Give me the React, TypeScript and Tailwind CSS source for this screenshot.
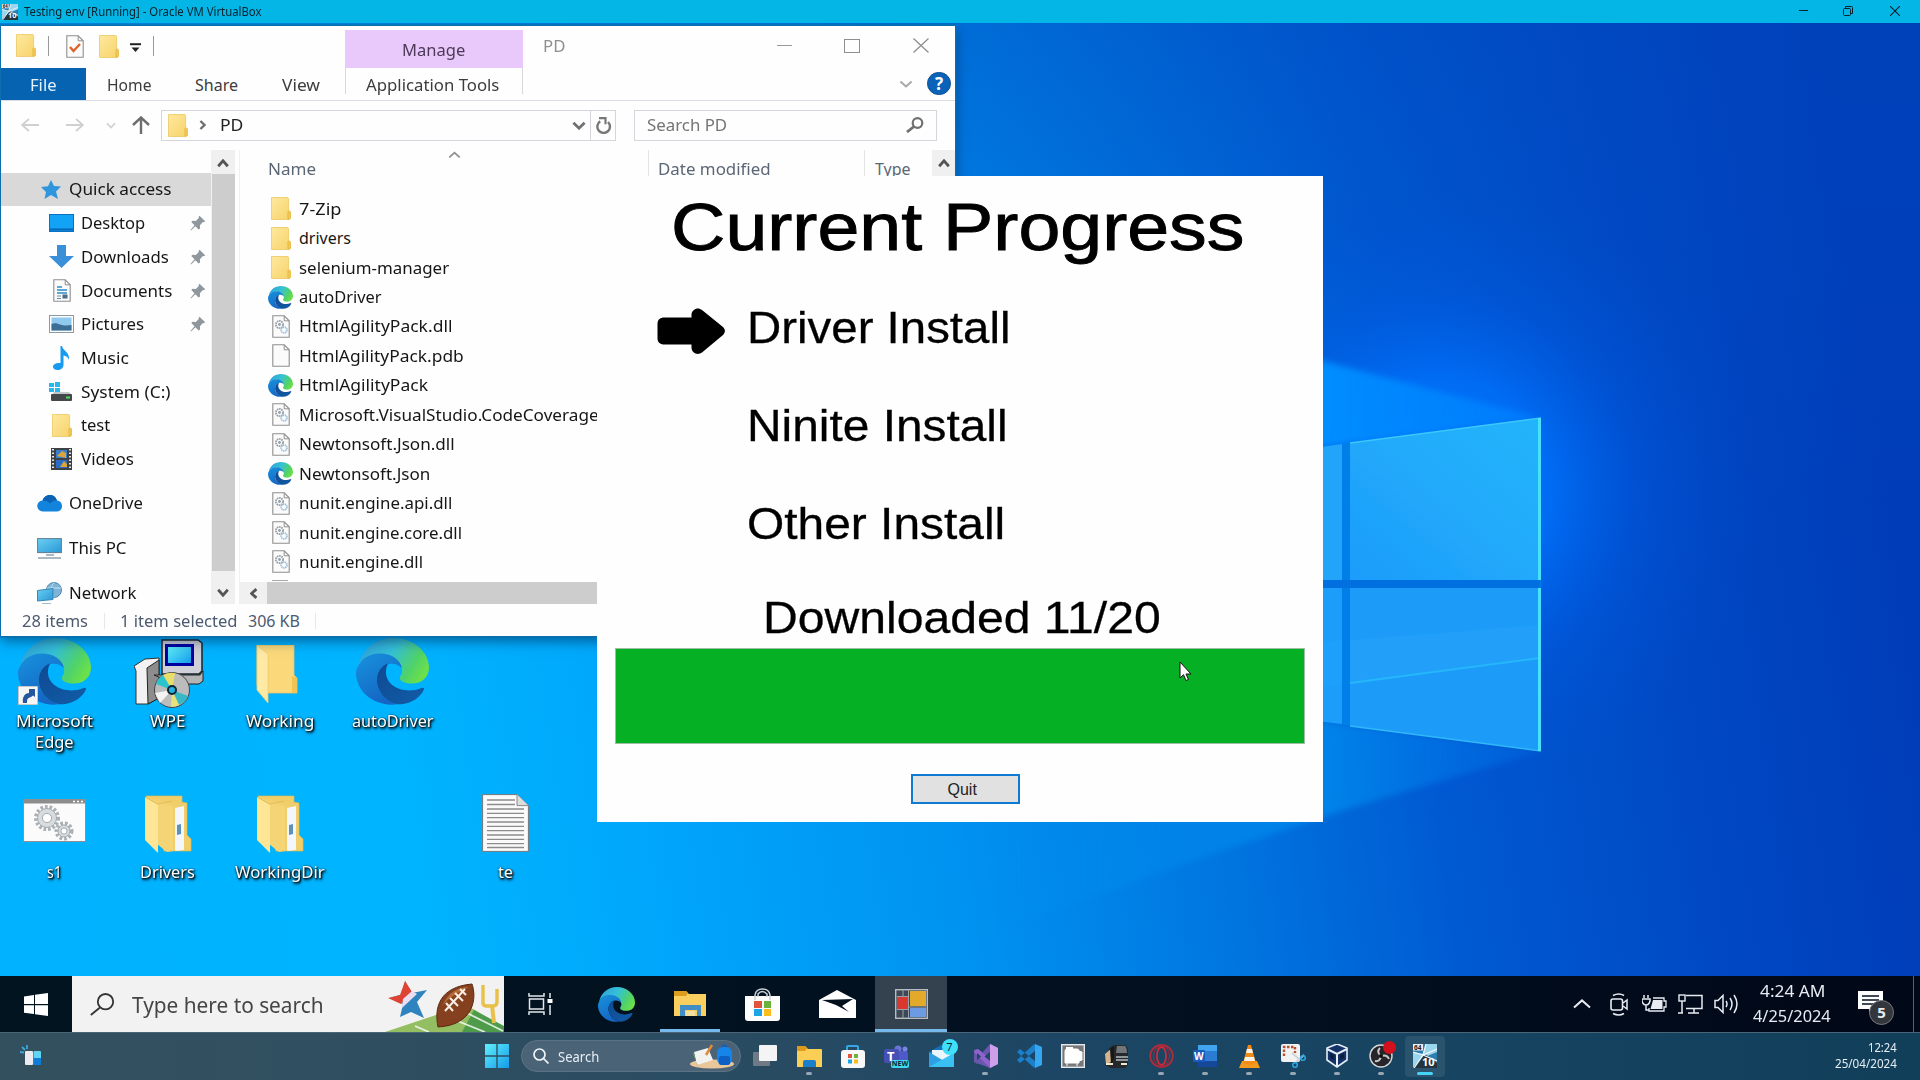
import React, { useLayoutEffect, useRef, useState } from "react";

/* Single line of text stretched horizontally to a given width. */
function T({ w, children, className = "" }: { w: number; children: string; className?: string }) {
  const ref = useRef<HTMLSpanElement>(null);
  const [k, setK] = useState(1);
  useLayoutEffect(() => {
    if (ref.current && ref.current.offsetWidth) setK(w / ref.current.offsetWidth);
  }, [w, children]);
  return (
    <span className={"flex shrink-0 whitespace-nowrap " + className} style={{ width: w }}>
      <span ref={ref} className="block shrink-0 origin-left" style={{ transform: `scaleX(${k})` }}>
        {children}
      </span>
    </span>
  );
}

function Svg({ w, h, vb, children, className = "" }: { w: number; h: number; vb?: string; children: React.ReactNode; className?: string }) {
  return (
    <svg width={w} height={h} viewBox={vb ?? `0 0 ${w} ${h}`} preserveAspectRatio="none" fill="none" className={"shrink-0 " + className}>
      {children}
    </svg>
  );
}

/* ---------- shared icons ---------- */

const Defs = () => (
  <svg width="0" height="0" className="absolute">
    <defs>
      <linearGradient id="eTop" x1="0" y1="0.2" x2="1" y2="0.6">
        <stop offset="0" stopColor="#2f9fd8" />
        <stop offset="0.45" stopColor="#35c1d8" />
        <stop offset="0.8" stopColor="#4fd26a" />
        <stop offset="1" stopColor="#6be04a" />
      </linearGradient>
      <linearGradient id="eMid" x1="0" y1="0" x2="0.5" y2="1">
        <stop offset="0" stopColor="#1793dd" />
        <stop offset="1" stopColor="#1565c4" />
      </linearGradient>
      <linearGradient id="eLow" x1="0" y1="0" x2="1" y2="1">
        <stop offset="0" stopColor="#0f4a92" />
        <stop offset="1" stopColor="#125ca8" />
      </linearGradient>
      <linearGradient id="fold" x1="0" y1="0" x2="1" y2="1">
        <stop offset="0" stopColor="#ffe9a0" />
        <stop offset="1" stopColor="#f6d268" />
      </linearGradient>
      <linearGradient id="w11" x1="0" y1="0" x2="1" y2="1">
        <stop offset="0" stopColor="#5ff0fb" />
        <stop offset="1" stopColor="#159bea" />
      </linearGradient>
      <linearGradient id="scr" x1="0" y1="0" x2="1" y2="1">
        <stop offset="0" stopColor="#6bd0f4" />
        <stop offset="1" stopColor="#2a97d6" />
      </linearGradient>
    </defs>
  </svg>
);

const Edge = ({ w, h }: { w: number; h: number }) => (
  <Svg w={w} h={h} vb="0 0 100 100">
    <path d="M3 42C8 16 28 0 51 0c28 0 49 21 49 44 0 15-10 24-24 24-10 0-17-4-16-9 1-4 4-5 3-12C61 34 48 24 32 24 18 24 8 32 3 42z" fill="url(#eTop)" />
    <path d="M2 44C7 31 18 23 33 23c15 0 28 9 30 22-4-5-11-8-19-6C30 43 25 60 31 76c4 11 14 20 25 23C25 103 0 80 0 52c0-3 1-6 2-8z" fill="url(#eMid)" />
    <path d="M44 38c-14 5-19 22-13 38 5 13 17 24 32 23 14-2 25-10 30-22 1-2-1-4-4-2-21 9-47-1-48-23 0-6 1-10 3-14z" fill="url(#eLow)" />
  </Svg>
);

const Folder = ({ w = 20, h = 23 }: { w?: number; h?: number }) => (
  <Svg w={w} h={h} vb="0 0 20 23">
    <path d="M.5.5H17l.6 1v12l1.9 1V21l-1.2 1.5H.5z" fill="url(#fold)" stroke="#ecc860" strokeWidth=".8" />
    <path d="M17 14.5v7.5M17 14l2.5 1.5v6L17 22.5z" stroke="#e8bd4b" fill="#f1c757" strokeWidth=".7" />
  </Svg>
);

const Page = ({ children }: { children?: React.ReactNode }) => (
  <Svg w={18} h={23}>
    <path d="M.8.8h11.4l5 5v16.4H.8z" fill="#fbfbfb" stroke="#8f8f8f" strokeWidth="1.1" />
    <path d="M12.2.8v5h5" stroke="#8f8f8f" />
    {children}
  </Svg>
);

const Dll = () => (
  <Page>
    <circle cx="7.5" cy="9.5" r="3.6" stroke="#959fa8" strokeWidth="1.8" strokeDasharray="1.6 .7" />
    <circle cx="7.5" cy="9.5" r="1.4" fill="#959fa8" />
    <circle cx="12" cy="15" r="2.9" stroke="#9fc0d8" strokeWidth="1.8" strokeDasharray="1.4 .6" />
  </Page>
);

const Pin = () => (
  <Svg w={16} h={16}>
    <path d="M9.5.8l5.7 5.4-1.3 1.1-1-.3-3 3.2.2 3.2-1.5 1.2-3.2-3.3L1 15.6.5 15l4-4.7L1.3 7l1.3-1.2 3.2.2 3-3-.2-1.1z" fill="#8f979e" />
  </Svg>
);

const Chev = ({ d, w = 14, h = 10, c = "#606060", s = 2 }: { d: "up" | "down" | "left" | "right"; w?: number; h?: number; c?: string; s?: number }) => {
  const p = { up: "M10 80L50 20L90 80", down: "M10 20L50 80L90 20", left: "M80 10L20 50L80 90", right: "M20 10L80 50L20 90" }[d];
  return (
    <Svg w={w} h={h} vb="0 0 100 100">
      <path d={p} stroke={c} strokeWidth={s} vectorEffect="non-scaling-stroke" />
    </Svg>
  );
};

/* ---------- wallpaper ---------- */

const Wallpaper = () => (
  <svg className="absolute inset-0" width="1920" height="953" viewBox="0 23 1920 953">
    <defs>
      <linearGradient id="bg" gradientUnits="userSpaceOnUse" x1="0" y1="976" x2="1920" y2="700">
        <stop offset="0" stopColor="#00b2ff" />
        <stop offset=".22" stopColor="#00b4ff" />
        <stop offset=".36" stopColor="#00a4fa" />
        <stop offset=".5" stopColor="#0092f0" />
        <stop offset=".63" stopColor="#0076e0" />
        <stop offset=".75" stopColor="#005ad2" />
        <stop offset=".88" stopColor="#0048c4" />
        <stop offset="1" stopColor="#003cb8" />
      </linearGradient>
      <radialGradient id="glow" gradientUnits="userSpaceOnUse" cx="1440" cy="490" r="320">
        <stop offset="0" stopColor="#007cff" />
        <stop offset=".35" stopColor="#0070fa" stopOpacity=".85" />
        <stop offset=".6" stopColor="#005ee8" stopOpacity=".4" />
        <stop offset="1" stopColor="#004ccc" stopOpacity="0" />
      </radialGradient>
      <linearGradient id="dark" x1="0" y1="0" x2="0" y2="1">
        <stop offset="0" stopColor="#0048bc" stopOpacity=".4" />
        <stop offset="1" stopColor="#0050c8" stopOpacity="0" />
      </linearGradient>
      <linearGradient id="beamA" x1="0" y1="0" x2="1" y2="0">
        <stop offset="0" stopColor="#0090ff" />
        <stop offset="1" stopColor="#0080ff" stopOpacity=".7" />
      </linearGradient>
      <linearGradient id="beamB" gradientUnits="userSpaceOnUse" x1="1000" y1="0" x2="1541" y2="0">
        <stop offset="0" stopColor="#0094f2" stopOpacity="0" />
        <stop offset=".6" stopColor="#0088ec" stopOpacity=".85" />
        <stop offset="1" stopColor="#006ce4" stopOpacity=".4" />
      </linearGradient>
      <linearGradient id="pane" x1="0" y1="1" x2="1" y2="0">
        <stop offset="0" stopColor="#1c9cfb" />
        <stop offset=".6" stopColor="#22acfb" />
        <stop offset="1" stopColor="#24b4fa" />
      </linearGradient>
      <filter id="soft" x="-10%" y="-10%" width="120%" height="120%"><feGaussianBlur stdDeviation="3" /></filter>
      <filter id="line" x="-10%" y="-10%" width="120%" height="120%"><feGaussianBlur stdDeviation=".6" /></filter>
    </defs>
    <rect y="23" width="1920" height="953" fill="url(#bg)" />
    <rect y="23" width="1920" height="480" fill="url(#dark)" />
    <rect y="23" width="1920" height="953" fill="url(#glow)" />
    <path d="M1300 355L1541 418L1350 443L1300 450z" fill="url(#beamA)" filter="url(#soft)" />
    <path d="M1300 718L1541 751L1350 808L1180 865L1000 930V700z" fill="url(#beamB)" filter="url(#soft)" />
    <path d="M1300 449L1541 418V751L1300 719z" fill="#007fe8" />
    <rect x="1300" y="580" width="240" height="8" fill="#006fe0" />
    <g filter="url(#line)">
      <path d="M1300 450L1342 444V580H1300z" fill="#22a4fb" />
      <path d="M1350 443L1541 418V580H1350z" fill="url(#pane)" />
      <path d="M1300 588H1342V724L1300 719z" fill="#1c9dfa" />
      <path d="M1350 588H1541V751L1350 726z" fill="#1f9cf8" />
      <path d="M1300 645V690L1342 684V640zM1350 683L1540 658V625L1350 640z" fill="#22a6fb" opacity=".35" />
      <path d="M1350 683L1540 658" stroke="#26b6fb" strokeWidth="2" />
      <path d="M1350 443L1541 418" stroke="#3cc8fb" strokeWidth="1.5" />
      <path d="M1350 726L1541 751" stroke="#30b8f8" strokeWidth="1.5" />
      <path d="M1539.500 418V580M1539.500 588V751" stroke="#46e2f8" strokeWidth="3" />
    </g>
  </svg>
);

/* ---------- explorer window ---------- */

const side: { n: string; w: number; icon: React.ReactNode; pin?: boolean }[] = [
  { n: "Desktop", w: 64, pin: true, icon: <Svg w={25} h={18}><rect x=".5" y=".5" width="24" height="17" fill="#12a2f6" stroke="#0a72c2" /><path d="M1 15.500h23" stroke="#0865b4" strokeWidth="2" /></Svg> },
  { n: "Downloads", w: 88, pin: true, icon: <Svg w={25} h={23}><path d="M8 0h9v11h8L12.500 23 0 11h8z" fill="#3990d8" /></Svg> },
  { n: "Documents", w: 91, pin: true, icon: <Page><path d="M4 8h5M4 11h10M4 14h10" stroke="#2b8ac6" strokeWidth="1.400" /><path d="M4 17h4M4 19.500h4" stroke="#6a8ca4" /><rect x="9.500" y="15.500" width="5" height="4" fill="#4b6d86" /></Page> },
  { n: "Pictures", w: 63, pin: true, icon: <Svg w={25} h={18}><rect x=".5" y=".5" width="24" height="17" fill="#fff" stroke="#8d99a3" /><rect x="2.500" y="2.500" width="20" height="13" fill="#8fc9ee" /><path d="M2.500 9c6-3 8 3 20 1v5.500h-20z" fill="#3b6e92" /></Svg> },
  { n: "Music", w: 48, icon: <Svg w={18} h={24}><path d="M9 0c1 5 8 6 7 14-1-3-3-4-5.500-4.500V19c0 3-3 5-6 5S0 22.500 0 20.500 3 16.500 7.500 17V0z" fill="#189af0" /></Svg> },
  { n: "System (C:)", w: 90, icon: <Svg w={25} h={19}><path d="M0 1h5v4H0zM6 0h5v5H6zM0 6h5v4H0zM6 6h5v4H6z" fill="#28b8ee" /><path d="M5 10h15l3 3H3z" fill="#c4c7c9" /><rect x="2" y="12" width="21" height="7" rx="1" fill="#45484a" /><path d="M17 15.500h4" stroke="#4be05a" strokeWidth="2" /></Svg> },
  { n: "test", w: 29, icon: <Folder /> },
  { n: "Videos", w: 53, icon: <Svg w={21} h={22}><rect width="21" height="22" fill="#3d4044" /><path d="M2 1v20M19 1v20" stroke="#e8e8e8" strokeWidth="2" strokeDasharray="1.500 2" /><rect x="5" y="2" width="11" height="8" fill="#3a7fc8" /><rect x="5" y="12" width="11" height="8" fill="#2a6cc4" /><path d="M6 8l5-5 4 2v5zM9 19l4-6 3 3v3z" fill="#d9a53a" /></Svg> },
];

const files: [string, number, string][] = [
  ["7-Zip", 42, "f"], ["drivers", 52, "f"], ["selenium-manager", 150, "f"], ["autoDriver", 83, "e"],
  ["HtmlAgilityPack.dll", 153, "d"], ["HtmlAgilityPack.pdb", 165, "p"], ["HtmlAgilityPack", 129, "e"],
  ["Microsoft.VisualStudio.CodeCoverage", 300, "d"], ["Newtonsoft.Json.dll", 156, "d"], ["Newtonsoft.Json", 131, "e"],
  ["nunit.engine.api.dll", 153, "d"], ["nunit.engine.core.dll", 163, "d"], ["nunit.engine.dll", 124, "d"],
];

const Explorer = () => (
  <div className="absolute left-[1px] top-[3px] flex h-[610px] w-[954px] flex-col overflow-hidden bg-[#fefefe] text-[16px] leading-[20px] text-[#161616] shadow-[0_0_0_1.5px_#0b6fae,0_5px_12px_rgba(0,30,70,0.55)]">
    {/* title row */}
    <div className="flex h-[42px] shrink-0">
      <div className="flex w-[344px] items-center pb-[3px] pl-[15px]">
        <Folder />
        <div className="ml-[12px] h-[20px] w-px bg-[#9a9a9a]" />
        <div className="ml-[17px] mt-[2px]"><Page><path d="M4 12l3.500 4L14 9" stroke="#e0622c" strokeWidth="2.400" /></Page></div>
        <div className="ml-[15px] mt-[2px]"><Folder /></div>
        <div className="ml-[11px] mt-[4px]"><Svg w={11} h={10}><path d="M0 1.200h11" stroke="#222" strokeWidth="2" /><path d="M1.500 4.500h8L5.500 9z" fill="#222" /></Svg></div>
        <div className="ml-[12px] h-[20px] w-px bg-[#9a9a9a]" />
      </div>
      <div className="mt-[4px] flex h-[38px] w-[178px] items-center bg-[#e9c9fb] pl-[57px] pt-px text-[#4c3a58]"><T w={63}>Manage</T></div>
      <div className="flex flex-1 items-center pb-[3px] text-[#8f8f8f]">
        <div className="pl-[20px]"><T w={22}>PD</T></div>
        <div className="ml-[212px] h-[1.5px] w-[15px] bg-[#9a9a9a]" />
        <div className="ml-[52px] h-[14px] w-[16px] border-[1.5px] border-[#8f8f8f]" />
        <Svg w={16} h={15} className="ml-[53px]"><path d="M.5.5l15 14M15.500.5l-15 14" stroke="#8f8f8f" strokeWidth="1.300" /></Svg>
      </div>
    </div>
    {/* ribbon tabs */}
    <div className="flex h-[33px] shrink-0 items-center border-b border-[#dcdce4] text-[#3c3c3c]">
      <div className="flex h-[32px] w-[85px] items-center bg-[#0563b1] pl-[29px] pt-px text-[#e6f2fc]"><T w={27}>File</T></div>
      <div className="flex w-[259px] items-center pl-[21px] pt-px">
        <T w={45}>Home</T>
        <T w={43} className="ml-[43px]">Share</T>
        <T w={38} className="ml-[44px]">View</T>
      </div>
      <div className="flex h-[26px] w-[178px] items-center self-start border-x border-[#d8d8d8] pl-[20px] pt-[7px]"><T w={133}>Application Tools</T></div>
      <div className="flex flex-1 items-center justify-end pb-px pr-[4px]">
        <Chev d="down" w={14} h={8} c="#a8a8a8" />
        <div className="ml-[14px] flex h-[23px] w-[24px] items-center justify-center rounded-full border border-[#0a4f94] bg-[#0a63b8] text-[17px] font-bold text-white">?</div>
      </div>
    </div>
    {/* navigation */}
    <div className="flex h-[49px] shrink-0 items-center pb-px">
      <Svg w={18} h={14} className="ml-[20px]"><path d="M8 1L1 7l7 6M1 7h17" stroke="#d0d0d0" strokeWidth="1.800" /></Svg>
      <Svg w={18} h={14} className="ml-[27px]"><path d="M10 1l7 6-7 6M17 7H0" stroke="#d0d0d0" strokeWidth="1.800" /></Svg>
      <div className="ml-[22px]"><Chev d="down" w={10} h={7} c="#d0d0d0" s={1.6} /></div>
      <Svg w={18} h={18} className="ml-[16px]"><path d="M1 9L9 1.500 17 9M9 2v16" stroke="#6d6d6d" strokeWidth="2.400" /></Svg>
      <div className="ml-[11px] flex h-[31px] w-[455px] items-center border border-[#d5d5dc] pl-[6px]">
        <Folder />
        <div className="ml-[11px]"><Chev d="right" w={7} h={10} c="#6d6d6d" s={2.4} /></div>
        <T w={23} className="ml-[14px] text-[#222]">PD</T>
        <div className="ml-[329px]"><Chev d="down" w={14} h={9} c="#707070" s={2.8} /></div>
        <div className="ml-[4px] h-full w-px bg-[#d5d5dc]" />
        <Svg w={16} h={17} className="ml-[5px]"><path d="M4.200 4.300A6.300 6.300 0 1 0 12 5" stroke="#777" strokeWidth="2.400" /><path d="M3 1.200h6.500v6" stroke="#777" strokeWidth="2.200" /></Svg>
      </div>
      <div className="ml-[18px] flex h-[31px] w-[303px] items-center justify-between border border-[#d5d5dc] pl-[12px] pr-[12px] text-[#757575]">
        <T w={80}>Search PD</T>
        <Svg w={18} h={16}><circle cx="11.500" cy="6" r="4.800" stroke="#707070" strokeWidth="2.200" /><path d="M8 9.500L1 15" stroke="#707070" strokeWidth="2.800" /></Svg>
      </div>
    </div>
    {/* body */}
    <div className="flex h-[454px] shrink-0">
      <div className="flex w-[210px] flex-col overflow-hidden pt-[23px]">
        <div className="mb-[0.5px] flex h-[33px] shrink-0 items-center bg-[#d9d9d9] pb-px pl-[40px]">
          <Svg w={20} h={19}><path d="M10 0l3 6 7 .5-5 5 2 7.500-7-4-6.500 4L5 12 0 7l7-.8z" fill="#2f95dc" /></Svg>
          <T w={103} className="ml-[8px]">Quick access</T>
        </div>
        {side.map((s) => (
          <div key={s.n} className="flex h-[33.65px] shrink-0 items-center">
            <div className="ml-[48px] flex w-[25px] justify-center">{s.icon}</div>
            <T w={s.w} className="ml-[7px]">{s.n}</T>
            {s.pin && <div className="ml-auto mr-[5px]"><Pin /></div>}
          </div>
        ))}
        <div className="mt-[11px] flex h-[33.6px] shrink-0 items-center pl-[36px]">
          <Svg w={25} h={17}><path d="M6 16.500a5.500 5.500 0 0 1-.500-11C7 1.500 10 0 13 0c4 0 6 2.500 7 5.500 3 .2 5 2.500 5 5.500s-2 5.500-5 5.500z" fill="#1384dc" /><path d="M5.500 5.500C7 1.500 10 0 13 0c4 0 6 2.500 7 5.500-3-.3-5 .5-7 3C10.500 6 8 5.300 5.500 5.500z" fill="#0b62b6" /></Svg>
          <T w={74} className="ml-[7px]">OneDrive</T>
        </div>
        <div className="mt-[11.3px] flex h-[33.6px] shrink-0 items-center pl-[36px]">
          <Svg w={25} h={21}><rect x=".6" y=".6" width="23.800" height="14" fill="url(#scr)" stroke="#5e7d92" /><path d="M9 17h8M1 20h23" stroke="#8fa3b0" strokeWidth="1.500" /></Svg>
          <T w={58} className="ml-[7px]">This PC</T>
        </div>
        <div className="mt-[11.3px] flex h-[33.6px] shrink-0 items-center pl-[36px]">
          <Svg w={25} h={23}><circle cx="17" cy="8" r="7.500" fill="#7eb4d6" stroke="#4c89b0" /><path d="M17 .5c-4 5-4 10 0 15M10 6h14" stroke="#c6e2f2" /><path d="M.5 8.500L16 6.500v11l-15.500 1.500z" fill="url(#scr)" stroke="#3a86b4" /><path d="M5 22h9" stroke="#8fa3b0" strokeWidth="1.500" /></Svg>
          <T w={67} className="ml-[7px]">Network</T>
        </div>
      </div>
      <div className="flex h-full w-[24px] flex-col items-center bg-[#f0f0f0]">
        <div className="flex h-[24px] items-center pt-[2px]"><Chev d="up" w={12} h={9} c="#555" s={2.8} /></div>
        <div className="h-[397px] w-[23px] bg-[#cdcdcd]" />
        <div className="flex flex-1 items-center pt-[10px]"><Chev d="down" w={12} h={9} c="#555" s={2.8} /></div>
      </div>
      <div className="ml-[4px] flex flex-1 flex-col overflow-hidden border-l border-[#f0f0f0]">
        <div className="flex h-[36px] shrink-0 text-[#5b6675]">
          <div className="flex w-[409px] items-center border-r border-[#e4e4e4] pl-[28px] pt-px">
            <T w={48}>Name</T>
            <div className="mb-[28px] ml-[132px]"><Chev d="up" w={13} h={8} c="#909090" s={1.8} /></div>
          </div>
          <div className="flex w-[216px] items-center border-r border-[#e4e4e4] pl-[9px] pt-px"><T w={113}>Date modified</T></div>
          <div className="flex w-[67px] items-center pl-[10px] pt-px"><T w={36}>Type</T></div>
          <div className="flex flex-1 items-start justify-center bg-[#f0f0f0] pt-[9px]"><Chev d="up" w={12} h={9} c="#555" s={2.8} /></div>
        </div>
        <div className="flex h-[396px] shrink-0 flex-col overflow-hidden pt-[8px]">
          {files.map(([n, w, k]) => (
            <div key={n} className="flex h-[29.44px] shrink-0 items-center">
              <div className="ml-[28px] flex w-[25px] justify-center">
                {k === "f" ? <Folder /> : k === "e" ? <Edge w={25} h={23} /> : k === "d" ? <Dll /> : <Page />}
              </div>
              <T w={w} className="ml-[6px]">{n}</T>
            </div>
          ))}
          <div className="ml-[32px] mt-[3px] h-px w-[16px] bg-[#a8a8a8]" />
        </div>
        <div className="flex h-[22px] bg-[#cdcdcd]">
          <div className="flex w-[27px] items-center justify-center bg-[#f0f0f0]"><Chev d="left" w={8} h={11} c="#555" s={2.8} /></div>
        </div>
      </div>
    </div>
    <div className="flex flex-1 items-center pl-[21px] pt-[2px] text-[#4c5a70]">
      <T w={66}>28 items</T>
      <div className="ml-[16px] h-[16px] w-px bg-[#e8e8e8]" />
      <T w={118} className="ml-[15px]">1 item selected</T>
      <T w={52} className="ml-[10px]">306 KB</T>
      <div className="ml-[15px] h-[16px] w-px bg-[#e8e8e8]" />
    </div>
  </div>
);

/* ---------- progress dialog ---------- */

const steps: [string, number][] = [
  ["Driver Install", 264],
  ["Ninite Install", 261],
  ["Other Install", 258],
];

const Dialog = () => (
  <div className="absolute left-[597px] top-[152.5px] flex h-[646.5px] w-[726px] flex-col bg-[#fefefe] font-['Liberation_Sans'] text-black">
    <div className="flex h-[103px] items-center pl-[74px]"><T w={574} className="text-[66px] leading-[76px] [-webkit-text-stroke:0.9px_#000]">Current Progress</T></div>
    {steps.map(([n, w], i) => (
      <div key={n} className="flex h-[98px] items-center">
        <div className="ml-[60px] w-[90px] pt-[7px]">
          {i === 0 && (
            <Svg w={68} h={46}>
              <path d="M6 9.500h28.500V6.500C35 1 41-1.500 45 2l21 17c2.500 2.500 2.500 5.500 0 8L45 44.500c-4 3-10 1-10.500-4.500v-3.500H6q-5.500-1-5.500-6v-15q0-5 5.500-6z" fill="#000" />
            </Svg>
          )}
        </div>
        <T w={w} className="text-[44px] leading-[50px] [-webkit-text-stroke:0.3px_#000]">{n}</T>
      </div>
    ))}
    <div className="flex h-[75.5px] items-end pb-[5px] pl-[166px]"><T w={398} className="text-[44px] leading-[50px] [-webkit-text-stroke:0.3px_#000]">Downloaded 11/20</T></div>
    <div className="ml-[18px] h-[96px] w-[690px] border-[1.5px] border-[#9fbfa4] bg-[#06b025]" />
    <div className="ml-[313.5px] mt-[30px] flex h-[30px] w-[109px] items-center border-[2.5px] border-[#0f7ad2] bg-[#e1e1e1] pl-[35px] pt-px text-[16px] text-[#222]"><T w={29}>Quit</T></div>
  </div>
);

/* ---------- desktop icons ---------- */

const OpenFolder = ({ full }: { full?: boolean }) => (
  <Svg w={48} h={58}>
    {full ? (
      <>
        <path d="M2 1h36v6l5 1v32l4 4v12H20z" fill="#f0cf6a" stroke="#dcb755" strokeWidth=".7" />
        <path d="M31 13l9-2v44l-9 1z" fill="#f3f7fb" />
        <path d="M33 30l4-1v10l-4 1z" fill="#5d93b8" />
        <path d="M1 2l28 9v45l-6 1-10-8z" fill="#f4d474" />
        <path d="M1 2l13 8v48L1 45z" fill="#ffe596" />
        <path d="M1 2l13 7 14-3" stroke="#e3bd57" />
      </>
    ) : (
      <>
        <path d="M3 0h37v30l3 3v15H14L3 40z" fill="#fbd97a" stroke="#e8c364" strokeWidth=".8" />
        <path d="M38 31l5 2v15h-5z" fill="#f0c452" />
        <path d="M3 0l11 9v49L3 45z" fill="#ffe9a4" stroke="#eccb70" strokeWidth=".8" />
      </>
    )}
  </Svg>
);

const Wpe = () => (
  <Svg w={70} h={69}>
    <path d="M0 27l11-7 14-1v40l-11 6H2V32z" fill="#f2f2f2" stroke="#333" />
    <path d="M13 29l12-8v38l-11 6z" fill="#8d8d8d" stroke="#222" />
    <path d="M28 1h36l4 3v28l-3 3H28z" fill="#d0d0d8" stroke="#222" strokeWidth="1.500" />
    <rect x="31" y="5" width="29" height="22" fill="#0000a0" />
    <rect x="34" y="8" width="23" height="16" fill="url(#w11)" />
    <path d="M20 36h46l3-4v10l-4 3H42z" fill="#b4b4b4" stroke="#222" />
    <circle cx="38" cy="51" r="17.500" fill="#bcbcbc" stroke="#444" />
    <path d="M38 51L29 36a17 17 0 0 1 12-2z" fill="#e9df68" />
    <path d="M38 51L22 45a17 17 0 0 1 7-9z" fill="#2cc4cc" />
    <path d="M38 51l16 6a17 17 0 0 1-9 9z" fill="#38b8c4" />
    <path d="M38 51l-1 17a17 17 0 0 0 8-2z" fill="#e8e27a" />
    <path d="M38 51L21 54l5 10z" fill="#f4f4f4" />
    <circle cx="38" cy="51" r="4" fill="#1fb4e0" stroke="#123" strokeWidth="2" />
  </Svg>
);

const Gear = ({ x, y, r }: { x: number; y: number; r: number }) => (
  <g transform={`translate(${x} ${y})`}>
    <circle r={r} stroke="#aab0b5" strokeWidth="4" strokeDasharray="2.6 1.9" />
    <circle r={r - 1.5} fill="#d9dcde" stroke="#a5abb0" />
    <circle r={r / 2.4} fill="#fff" stroke="#a5abb0" />
  </g>
);

type DI = { icon: React.ReactNode; lines: [string, number][] };
const Cell = ({ icon, lines }: DI) => (
  <div className="flex h-[124px] w-[112.700px] flex-col items-center">
    <div className="flex h-[70px] items-center">{icon}</div>
    <div className="mt-[3px] flex flex-col items-center text-[16px] leading-[21px] text-white [text-shadow:1px_1px_2px_#000,1px_2px_3px_rgba(0,0,0,0.9),0_0_2px_rgba(0,0,0,0.6)]">
      {lines.map(([t, w]) => <T key={t} w={w}>{t}</T>)}
    </div>
  </div>
);

const DesktopIcons = () => (
  <div className="absolute left-[-1.5px] top-[615px] flex flex-col gap-[27px]">
    <div className="flex">
      <Cell
        icon={
          <div className="relative mb-[4px]">
            <Edge w={73} h={67} />
            <Svg w={20} h={19} className="absolute bottom-0 left-0"><rect width="20" height="19" fill="#f6f6f6" stroke="#999" /><path d="M5 17C4 11 7 7 11 7V3h6v8l-2-1.500-2 1.500c-4 1-4 3-4 6z" fill="#24579c" /></Svg>
          </div>
        }
        lines={[["Microsoft", 77], ["Edge", 39]]}
      />
      <Cell icon={<div className="ml-[3px]"><Wpe /></div>} lines={[["WPE", 35]]} />
      <Cell icon={<div className="mr-[5px] mt-[1px]"><OpenFolder /></div>} lines={[["Working", 68]]} />
      <Cell icon={<div className="mb-[4px]"><Edge w={73} h={67} /></div>} lines={[["autoDriver", 82]]} />
    </div>
    <div className="flex">
      <Cell
        icon={<Svg w={63} h={43} className="mb-[7px]"><rect x=".5" y=".5" width="62" height="42" fill="#fbfbfb" stroke="#909090" /><path d="M0 2.500h63" stroke="#8d8d8d" strokeWidth="4" /><path d="M50 2.500h11" stroke="#fff" strokeWidth="1.500" strokeDasharray="2 2" /><Gear x={24} y={19} r={11} /><Gear x={41} y={32} r={7.5} /></Svg>}
        lines={[["s1", 15]]}
      />
      <Cell icon={<OpenFolder full />} lines={[["Drivers", 55]]} />
      <Cell icon={<OpenFolder full />} lines={[["WorkingDir", 90]]} />
      <div className="w-[112.700px]" />
      <Cell
        icon={
          <Svg w={47} h={58} className="mb-[3px]">
            <path d="M.6.6H35l11.400 11v45.800H.6z" fill="#fafafa" stroke="#777" />
            <path d="M35 .6v11h11.400" fill="#ddd" stroke="#888" />
            <path d="M5 6h28M5 10.500h28M5 15h37M5 19.300h37M5 23.600h37M5 28h37M5 32.300h37M5 36.600h37M5 41h37M5 45.300h37M5 49.600h37M5 53.500h37" stroke="#8c8c8c" strokeWidth="1.300" />
          </Svg>
        }
        lines={[["te", 15]]}
      />
    </div>
  </div>
);

/* ---------- guest taskbar ---------- */

const GuestBar = () => (
  <div className="flex h-[56px] shrink-0 items-center bg-[linear-gradient(90deg,#021420,#02101f_60%,#010818)] text-[#e8ecf2]">
    <div className="flex w-[72px] justify-center">
      <Svg w={24} h={23}><path d="M0 3.500L10 2v9H0zM11 1.800L24 0v11H11zM0 12.200h10V21L0 19.700zM11 12.200h13V23l-13-1.800z" fill="#fff" /></Svg>
    </div>
    <div className="flex h-full w-[432px] items-center bg-[#f2f2f2] pl-[18px]">
      <Svg w={25} h={23}><circle cx="15.500" cy="8.700" r="7.700" stroke="#333" strokeWidth="1.800" /><path d="M10 14.500L.8 22" stroke="#333" strokeWidth="1.800" /></Svg>
      <T w={192} className="ml-[17px] text-[22px] leading-[30px] text-[#454545]">Type here to search</T>
      <Svg w={119} h={56} className="ml-auto">
        <path d="M0 56L60 36c12-4 24-6 30-2l29 18v4z" fill="#93bf62" />
        <path d="M77 56l12-22 30 16v6z" fill="#4e9c4a" />
        <path d="M30 50l14 6M60 40l40 16M82 37l36 18" stroke="#fff" strokeWidth="1.800" opacity=".8" />
        <path d="M20 5l7 12 15-3-10 12 7 16-13-6-11 5 3-13L5 22l13-4z" fill="#2f83bf" />
        <path d="M20 5l7 11-11 12L3 22l12-3z" fill="#dd4433" />
        <path d="M27 15l5 3-15 14 1-9z" fill="#eadff0" />
        <path d="M53 51c-4-19 1-40 34-43 5 14 2 41-34 43z" fill="#85401f" stroke="#5c2a12" />
        <path d="M57 30C63 16 74 11 84 11c-8 4-20 10-27 19z" fill="#b56a3a" />
        <path d="M60 35l20-22M61 27l7 8M65 22l8 8M70 17l8 8M75 13l6 6" stroke="#f7eee6" strokeWidth="2" />
        <path d="M98 9v18q0 3 4 3h6q4 0 4-4V13" stroke="#e8c04a" strokeWidth="3.400" />
        <path d="M107 29l2 18" stroke="#e8c04a" strokeWidth="4" />
      </Svg>
    </div>
    <div className="flex h-full flex-1 items-center">
      <Svg w={25} h={22} className="ml-[24px]"><path d="M1 0v3h15V0M1 22v-3h15v3" stroke="#e4e8ec" strokeWidth="1.500" /><rect x="1.500" y="6" width="14" height="10" stroke="#e4e8ec" strokeWidth="1.500" /><path d="M22 0v5M22 12v10" stroke="#e4e8ec" strokeWidth="1.500" /><rect x="19.500" y="6" width="5" height="4" fill="#fff" /></Svg>
      <div className="ml-[45px]"><Edge w={37} h={35} /></div>
      <div className="ml-[25px] flex h-full w-[60px] flex-col items-center justify-between">
        <div className="h-[3px]" />
        <Svg w={33} h={26}><path d="M0 0h12l3 3h17v22H0z" fill="#f9cf60" /><path d="M0 0h12l2 2-2 3H0z" fill="#dc9e1c" /><path d="M6 14h21v11h-4v-6H11v6H6z" fill="#3f8fc6" /><path d="M12 20h9v5h-9z" fill="#f3dfa0" /></Svg>
        <div className="h-[3px] w-full bg-[#76b9ed]" />
      </div>
      <Svg w={35} h={33} className="ml-[25px]"><path d="M0 8h35v22q0 3-3 3H3q-3 0-3-3z" fill="#fdfdfd" /><path d="M10 12V7q1-6 7.500-6T25 7v5M13 9V6q4-5 9 0v3" stroke="#cdd2d6" strokeWidth="1.500" /><path d="M9 13h8v7H9z" fill="#e2553c" /><path d="M19 13h7v7h-7z" fill="#6cb33e" /><path d="M9 21h8v7H9z" fill="#1ea4e4" /><path d="M19 21h7v7h-7z" fill="#fbbc1c" /></Svg>
      <Svg w={37} h={28} className="ml-[39px]"><path d="M0 10L18 0l19 10v18H0z" fill="#fff" /><path d="M3 10l31-1-11 7 7 6-13-7z" fill="#02101e" /></Svg>
      <div className="ml-[19px] flex h-full w-[72px] flex-col items-center justify-between bg-[#34424f]">
        <div className="h-[3px]" />
        <Svg w={33} h={30}><rect x=".7" y=".7" width="31.600" height="28.600" fill="#3c4854" stroke="#b5bcc2" strokeWidth="1.400" /><rect x="2" y="8" width="11" height="12" fill="#d8382e" /><rect x="15" y="2" width="16" height="15" fill="#e2a92a" /><rect x="15" y="19" width="16" height="9" fill="#6c9be4" /><path d="M13.500 1v28M2 20.500h12M14 18h17M2 7.500h12M8 21v8M8 1v6" stroke="#9aa3ab" /></Svg>
        <div className="h-[3px] w-full bg-[#76b9ed]" />
      </div>
      <div className="ml-auto flex items-center">
        <Chev d="up" w={20} h={12} c="#e8ecf2" s={2} />
        <Svg w={18} h={23} className="ml-[18px]"><rect x="1" y="6" width="11.500" height="11" rx="2" stroke="#e8ecf2" strokeWidth="1.600" /><path d="M13 10l4-3v9l-4-3M3 2.500q6-3 11 0M3 20.500q6 3 11 0" stroke="#e8ecf2" strokeWidth="1.500" /></Svg>
        <Svg w={25} h={17} className="mb-[2px] ml-[14px]"><path d="M2 0v3M6 0v3M0 4h8v2q-1 4-4 4T0 6zM4 10v5h3" stroke="#e8ecf2" strokeWidth="1.500" /><path d="M11 3h11v3h2v6h-2v4H7v-3" stroke="#e8ecf2" strokeWidth="1.300" /><path d="M11 5h9.500v9H8.500z" fill="#e8ecf2" /></Svg>
        <Svg w={25} h={20} className="mb-[1px] ml-[11px]"><path d="M8 1.500h16v13H8M16 14.500V19M10 19h11M4 7v12M0 19h5" stroke="#e8ecf2" strokeWidth="1.500" /><rect x="1" y="1" width="6" height="6" stroke="#e8ecf2" strokeWidth="1.400" /></Svg>
        <Svg w={25} h={20} className="mb-[1px] ml-[11px]"><path d="M1 6.500h3l5-5v17l-5-5H1z" stroke="#e8ecf2" strokeWidth="1.500" /><path d="M12 7q2 3 0 6M16 4q4 6 0 12M20 1q6 9 0 18" stroke="#e8ecf2" strokeWidth="1.500" /></Svg>
        <div className="mb-[3px] ml-[14px] flex w-[78px] flex-col items-center text-[17px] leading-[25px]">
          <T w={65}>4:24 AM</T>
          <T w={78}>4/25/2024</T>
        </div>
        <div className="relative mb-[4px] ml-[27px]">
          <Svg w={25} h={22}><path d="M0 0h25v18h-10l-4 4v-4H0z" fill="#fff" /><path d="M4 5h17M4 9h17M4 13h13" stroke="#02101e" strokeWidth="1.600" /></Svg>
          <div className="absolute left-[11px] top-[9px] flex h-[25px] w-[25px] items-center justify-center rounded-full border border-[#777] bg-[#33373d] text-[15px] font-bold">5</div>
        </div>
        <div className="ml-[30px] mr-[6px] h-[56px] w-px bg-[#59616c]" />
      </div>
    </div>
  </div>
);

/* ---------- host taskbar ---------- */

const hostApps: { dot?: boolean; icon: React.ReactNode }[] = [
  { icon: <Svg w={24} h={23}><rect y="7" width="17" height="14" rx="1" fill="#6f7a84" /><rect x="6" width="18" height="16" rx="1" fill="#f4f4f4" /></Svg> },
  { dot: true, icon: <Svg w={25} h={22}><path d="M0 1h8l3 3h13q1 0 1 1v17H0z" fill="#fbcf56" /><path d="M0 1h8l2 2-2 3H0z" fill="#dd9a1b" /><path d="M6 22v-5q0-2 2-2h9q2 0 2 2v5z" fill="#1b80cc" /></Svg> },
  { icon: <Svg w={24} h={23}><path d="M6 6V2q0-1 1-1h9q1 0 1 1v4" stroke="#35a6e6" strokeWidth="2" /><rect y="5" width="24" height="18" rx="3" fill="#f8f8f8" /><path d="M7 9h4v4H7z" fill="#e2553c" /><path d="M13 9h4v4h-4z" fill="#6cb33e" /><path d="M7 14.500h4v4H7z" fill="#1ea4e4" /><path d="M13 14.500h4v4h-4z" fill="#fbbc1c" /></Svg> },
  {
    icon: (
      <div className="relative">
        <Svg w={26} h={23}><circle cx="14" cy="4" r="3.500" fill="#6a74d8" /><rect x="8" y="6" width="16" height="15" rx="3" fill="#5059c9" /><rect y="4" width="15" height="14" rx="2" fill="#4450b4" /><text x="3" y="16" fontSize="13" fontWeight="700" fill="#fff">T</text><circle cx="21" cy="4" r="2.500" fill="#7b83eb" /></Svg>
        <div className="absolute left-[7px] top-[15px] flex h-[8px] w-[18px] items-center justify-center rounded-[2px] bg-[#3fd8ee] text-[7px] font-bold leading-[8px] text-[#082830]">NEW</div>
      </div>
    ),
  },
  {
    icon: (
      <div className="relative">
        <Svg w={25} h={22}><path d="M0 7L12 0l13 7v15H0z" fill="#1470b8" /><path d="M3 5h19v10H3z" fill="#e9f6fc" /><path d="M0 7l25 15H0z" fill="#2f9fe4" /><path d="M25 8L0 22h25z" fill="#38c1f2" /></Svg>
        <div className="absolute left-[13px] top-[-6px] flex h-[16px] w-[16px] items-center justify-center rounded-full bg-[#3fe0fa] text-[11px] text-[#0a2a3a]">7</div>
      </div>
    ),
  },
  { dot: true, icon: <Svg w={25} h={24}><path d="M17 0l8 4v16l-8 4L1 8V7l4-2 12 10z" fill="#9b6fd6" /><path d="M17 0v8L4 20l-3-2V6l3-1 13 12v7L1 18" fill="#8a5ccb" opacity=".7" /><path d="M4 9v7l4-3.500zM17 8l-5.500 4.500L17 17z" fill="#1f4865" /><path d="M17 0l8 4v16l-8 4z" fill="#cf9ee8" /></Svg> },
  { icon: <Svg w={25} h={24}><path d="M18 0l-3 2L0 16l3 3L18 7zM18 24l-3-2L0 8l3-3 15 12z" fill="#1c7fca" /><path d="M18 0l7 3v18l-7 3z" fill="#34a6f2" /></Svg> },
  { icon: <Svg w={24} h={24}><rect x=".7" y=".7" width="22.600" height="22.600" fill="#77787c" stroke="#e8e8e8" strokeWidth="1.400" /><path d="M4 7q0-2 2-2h10q2 0 2 2l3 1v8l-3 1v2H4zM6 19v3M16 19v3" fill="#fff" stroke="#fff" /><rect x="5" y="3" width="7" height="3" fill="#fff" /></Svg> },
  { icon: <Svg w={24} h={23}><path d="M4 3l5-3h10q4 1 4 6v14l-3 3H6l-6-3z" fill="#26282b" /><path d="M12 1h8q2 2 2 7H11z" fill="#71767b" /><path d="M0 9l7-6 2 12-8 5z" fill="#d7b48c" /><path d="M5 4l4-3v14l-3 4z" fill="#17181a" /><path d="M11 12h12M11 15h12" stroke="#b5babd" strokeWidth="1.300" /><path d="M1 19h7M16 19h6" stroke="#f0ead0" strokeWidth="2" /></Svg> },
  { dot: true, icon: <Svg w={25} h={24}><ellipse cx="12.500" cy="12" rx="11.300" ry="11" stroke="#b02c3c" strokeWidth="1.800" /><ellipse cx="12.500" cy="12" rx="8" ry="10" stroke="#8e2a3c" strokeWidth="1.300" /><ellipse cx="12.500" cy="12" rx="4.500" ry="9" stroke="#d02a38" strokeWidth="1.800" /></Svg> },
  { dot: true, icon: <Svg w={24} h={22}><rect x="5" width="19" height="22" rx="1.500" fill="#2b7cd3" /><path d="M5 0h19v6H5z" fill="#41a5ee" /><path d="M5 16h19v6H5z" fill="#15479a" /><rect y="5" width="12" height="12" rx="1" fill="#185abd" /><text x="1" y="14.500" fontSize="10" fontWeight="700" fill="#fff">W</text></Svg> },
  { dot: true, icon: <Svg w={21} h={23}><path d="M3 16h15l3 7H0z" fill="#f09a1e" /><path d="M9 0h3l5 18q-6 3-13 0z" fill="#f28a16" /><path d="M8 4h5l1 4H7zM6 12h9l1 4H5z" fill="#f6f2ec" /></Svg> },
  { dot: true, icon: <Svg w={25} h={24}><rect width="19" height="18" rx="2" fill="#f2f2f2" /><path d="M3 12V3h11v6" stroke="#b8522e" strokeWidth="2.400" strokeDasharray="2.500 1.500" /><path d="M11 9l7 6M23 11l-8 7" stroke="#cfd6da" strokeWidth="2" /><circle cx="22" cy="14" r="2.300" stroke="#2ca4e4" strokeWidth="1.600" /><circle cx="14" cy="21" r="2.300" stroke="#2ca4e4" strokeWidth="1.600" /></Svg> },
  { dot: true, icon: <Svg w={22} h={24}><path d="M11 0l10 4v12l-10 7-10-7V4z" fill="#123268" stroke="#e6eef6" strokeWidth="1.600" /><path d="M1 5l10 5 10-5M11 10v13" stroke="#e6eef6" strokeWidth="2" /><path d="M4 9l4 2v5l-4-2zM18 9l-4 2v5l4-2z" fill="#0b1f45" /></Svg> },
  {
    dot: true,
    icon: (
      <div className="relative">
        <Svg w={24} h={24}><circle cx="12" cy="12" r="11" fill="#26242a" stroke="#d8d8d8" strokeWidth="1.400" /><path d="M12 12q-5-4-1-8M12 12q6-2 8 3M12 12q-1 6-6 5" stroke="#c9c9c9" strokeWidth="2" /><circle cx="12" cy="12" r="2" fill="#111" /></Svg>
        <div className="absolute left-[14px] top-[-3px] h-[13px] w-[13px] rounded-full bg-[#d3111d]" />
      </div>
    ),
  },
];

const VmIcon = ({ s }: { s: number }) => (
  <Svg w={s} h={s} vb="0 0 24 24">
    <rect width="24" height="24" rx="1" fill="#2c7fae" />
    <path d="M0 8l10 2 3-10h11v8l-12 5L0 24z" fill="#9ad6ee" />
    <path d="M0 24L12 10l12 9v5z" fill="#25333e" />
    <path d="M13 0L10 11 24 5M0 8l10 3L1 24M10 11l14 6" stroke="#eef6fa" strokeWidth="1.300" />
    <rect width="10" height="6.500" fill="#eee" />
    <text x="1" y="5.600" fontSize="6.500" fontWeight="700" fill="#222">64</text>
    <text x="9" y="21.500" fontSize="11" fontWeight="700" fill="#fff">10</text>
  </Svg>
);

const HostBar = () => (
  <div className="flex h-[48px] shrink-0 items-center border-t border-[#4a6578] bg-[linear-gradient(90deg,#33505e,#2f4f60_20%,#294b62_40%,#1c4664_55%,#174461_75%,#113f5a)] text-[#e6eef4]">
    <div className="w-[485px] pb-[4px] pl-[19px]">
      <Svg w={23} h={20}><path d="M1 7l4 .5M3 2l3 3M8 0v4" stroke="#3fa6d8" strokeWidth="1.800" /><rect x="6" y="6" width="8" height="14" rx="1" fill="#ececf0" /><rect x="14.500" y="6" width="7.500" height="14" rx="1" fill="#62d4f4" /><path d="M14.500 13h7.500v7h-7.500z" fill="#0f7cd8" /></Svg>
    </div>
    <Svg w={24} h={24} className="mb-px"><path d="M0 0h11.300v11.300H0zM12.700 0H24v11.300H12.700zM0 12.700h11.300V24H0zM12.700 12.700H24V24H12.700z" fill="url(#w11)" /></Svg>
    <div className="mb-px ml-[12px] flex h-[32px] w-[220px] items-center rounded-full border border-[#5c7384] bg-[#4b6376] pl-[11px]">
      <Svg w={16} h={16}><circle cx="6.500" cy="6.500" r="5.500" stroke="#f0f4f6" strokeWidth="1.700" /><path d="M10.500 10.500l5 5" stroke="#f0f4f6" strokeWidth="1.700" /></Svg>
      <T w={41} className="ml-[9px] text-[14px]">Search</T>
      <Svg w={46} h={25} className="ml-auto mr-[5px]">
        <ellipse cx="23" cy="20" rx="22" ry="4.500" fill="#e9c79a" />
        <path d="M5 8l14-4 5 12-16 5z" fill="#f2f2f0" /><path d="M5 9l3 12 1 1-5-12z" fill="#6aa356" /><path d="M17 11l6-10" stroke="#e08a3a" strokeWidth="2.500" />
        <rect x="28" y="3" width="15" height="18" rx="6" fill="#1784ea" /><rect x="30" y="12" width="11" height="9" rx="2" fill="#0d5fc4" /><path d="M33 3q2-4 5 0" stroke="#0d5fc4" strokeWidth="1.500" />
      </Svg>
    </div>
    <div className="ml-[2px] flex h-full">
      {hostApps.map((a, i) => (
        <div key={i} className="flex w-[44px] flex-col items-center pt-[10px]">
          <div className="flex h-[26px] items-center">{a.icon}</div>
          {a.dot && <div className="mt-[3px] h-[3px] w-[6px] rounded-full bg-[#97a7b3]" />}
        </div>
      ))}
      <div className="ml-[2px] mt-[3px] flex h-[41px] w-[40px] flex-col items-center rounded-[4px] bg-[#2a536e] pt-[8px]">
        <VmIcon s={24} />
        <div className="mt-[4px] h-[3px] w-[16px] rounded-full bg-[#48d4f6]" />
      </div>
    </div>
    <div className="mb-px ml-auto mr-[23px] flex flex-col items-end text-[12px] leading-[16px]">
      <T w={29}>12:24</T>
      <T w={62}>25/04/2024</T>
    </div>
  </div>
);

export default function App() {
  return (
    <div className="flex h-[1080px] w-[1920px] flex-col overflow-hidden bg-[#02101e] font-['Noto_Sans',sans-serif]">
      <Defs />
      <div className="flex h-[23px] shrink-0 items-center bg-[#04b6e6] pl-[2px] text-[12px] text-[#08222e]">
        <VmIcon s={16} />
        <T w={237} className="ml-[6px]">Testing env [Running] - Oracle VM VirtualBox</T>
        <div className="mb-[2px] ml-auto mr-[20px] flex items-center">
          <div className="h-px w-[9px] bg-[#08222e]" />
          <Svg w={10} h={10} className="ml-[35px]"><rect x=".5" y="2.500" width="7" height="7" rx="1" stroke="#08222e" /><path d="M2.500 2V.5h6q1 0 1 1v6H8" stroke="#08222e" /></Svg>
          <Svg w={10} h={10} className="ml-[37px]"><path d="M0 0l10 10M10 0L0 10" stroke="#08222e" strokeWidth="1.100" /></Svg>
        </div>
      </div>
      <div className="relative h-[953px] shrink-0 overflow-hidden">
        <Wallpaper />
        <DesktopIcons />
        <Explorer />
        <Dialog />
        <Svg w={13} h={21} className="absolute left-[1179px] top-[638px]"><path d="M1 1v16l3.500-3.300L7 19.500l2.500-1L7 13h5z" fill="#fff" stroke="#111" /></Svg>
      </div>
      <GuestBar />
      <HostBar />
    </div>
  );
}
